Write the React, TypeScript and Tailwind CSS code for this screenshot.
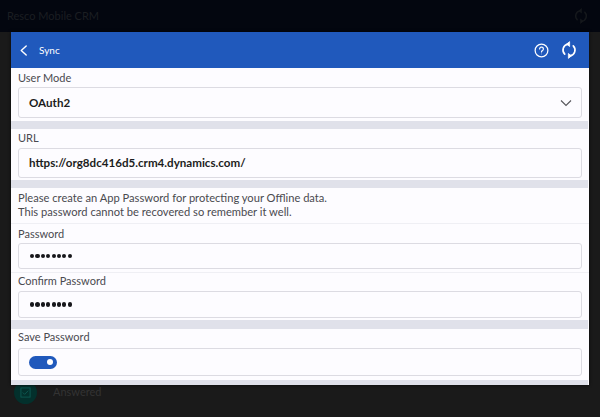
import React from "react";

function SyncIcon({ className }: { className?: string }) {
  return (
    <svg viewBox="0 0 24 24" fill="none" stroke="currentColor" strokeWidth="2.2" strokeLinecap="round" strokeLinejoin="round" className={className}>
      <path d="M6.3 17.6A8 8 0 0 1 10.8 4.1" />
      <path d="M17.7 6.4A8 8 0 0 1 13.2 19.9" />
      <path d="M12.4 1.2 L8.9 4.1 L12.4 7Z" fill="currentColor" strokeWidth="1.2" />
      <path d="M11.6 22.8 L15.1 19.9 L11.6 17Z" fill="currentColor" strokeWidth="1.2" />
    </svg>
  );
}

function Label({ children }: { children: React.ReactNode }) {
  return <div className="text-[11px] leading-[16px] text-[#4a4a4f]">{children}</div>;
}

function Box({ className, children }: { className: string; children?: React.ReactNode }) {
  return (
    <div className={`mx-[7px] flex items-center rounded-[3px] border border-[#dcdbe2] bg-[#fdfcff] pl-[10px] pr-[9px] text-[11.6px] font-bold text-[#1c1c20] ${className}`}>
      {children}
    </div>
  );
}

function Band({ className }: { className: string }) {
  return <div className={`bg-[#e0e1ea] ${className}`} />;
}

function Dots() {
  return (
    <div className="ml-px flex gap-[1.2px]">
      {[0, 1, 2, 3, 4, 5, 6, 7].map((i) => (
        <span key={i} className="h-[4.2px] w-[4.2px] rounded-full bg-[#17171b]" />
      ))}
    </div>
  );
}

export default function App() {
  return (
    <div className="relative h-[417px] w-[600px] overflow-hidden bg-[#1a1a1a] font-['Lato','Noto_Sans',sans-serif]">
      <div className="flex h-[32px] items-center justify-between bg-[#03060f] pl-[7px] pr-[11px] text-[#15181c]">
        <span className="text-[11px] text-[#1b1e22]">Resco Mobile CRM</span>
        <SyncIcon className="h-[16px] w-[16px]" />
      </div>

      <div className="absolute bottom-[13px] left-[14px] flex items-center gap-[16px]">
        <div className="flex h-[23px] w-[23px] items-center justify-center rounded-full bg-[#03302c]">
          <svg viewBox="0 0 12 12" fill="none" stroke="#0d5a52" strokeWidth="1" className="h-[11px] w-[11px]">
            <rect x="1" y="1" width="10" height="10" />
            <path d="M3 6l2 2 4-4" />
          </svg>
        </div>
        <span className="text-[11px] text-[#333333]">Answered</span>
      </div>

      <div className="absolute left-[11px] top-[32px] flex h-[353px] w-[578px] flex-col bg-[#fdfcff] shadow-[0_0_3px_rgba(0,0,0,0.8)]">
        <div className="flex h-[36px] shrink-0 items-center justify-between bg-[#2059bc] pl-[8px] pr-[11px] text-white">
          <div className="flex items-center gap-[11px]">
            <svg viewBox="0 0 10 14" fill="none" stroke="currentColor" strokeWidth="1.6" strokeLinecap="round" strokeLinejoin="round" className="h-[13px] w-[9px]">
              <path d="M8 2L2.5 7 8 12" />
            </svg>
            <span className="text-[10px]">Sync</span>
          </div>
          <div className="flex items-center gap-[11px]">
            <svg viewBox="0 0 16 16" fill="none" stroke="currentColor" strokeWidth="1.3" strokeLinecap="round" className="h-[15px] w-[15px]">
              <circle cx="8" cy="8" r="6.8" />
              <path d="M6 6.3a2 2 0 1 1 3.1 1.7c-.7.4-1.1.8-1.1 1.5" />
              <circle cx="8" cy="11.6" r=".5" fill="currentColor" stroke="none" />
            </svg>
            <SyncIcon className="h-[18px] w-[18px]" />
          </div>
        </div>

        <div className="flex-1 overflow-hidden">
          <div className="px-[7px] pt-[2px]"><Label>User Mode</Label></div>
          <Box className="mt-[1px] h-[31px] justify-between">
            <span>OAuth2</span>
            <svg viewBox="0 0 12 8" fill="none" stroke="#55555a" strokeWidth="1.1" className="h-[8px] w-[12px]">
              <path d="M1 1.5l5 5 5-5" />
            </svg>
          </Box>
          <Band className="mr-px mt-[3px] h-[8px]" />

          <div className="px-[7px] pt-[1px]"><Label>URL</Label></div>
          <Box className="mt-[2px] h-[30px]">https://org8dc416d5.crm4.dynamics.com/</Box>
          <Band className="mr-px mt-[2px] h-[8px]" />

          <div className="px-[7px] pt-[3px] text-[11.15px] leading-[14px] text-[#4a4a4f]">
            <div>Please create an App Password for protecting your Offline data.</div>
            <div>This password cannot be recovered so remember it well.</div>
          </div>
          <div className="mt-[4px] h-px bg-[#efeff4]" />

          <div className="px-[7px] pt-[2px]"><Label>Password</Label></div>
          <Box className="mt-[1px] h-[26px]"><Dots /></Box>
          <div className="mt-[3px] h-px bg-[#efeff4]" />

          <div className="px-[7px]"><Label>Confirm Password</Label></div>
          <Box className="mt-[2px] h-[27px]"><Dots /></Box>
          <Band className="mr-px mt-[2px] h-[9px]" />

          <div className="px-[7px]"><Label>Save Password</Label></div>
          <Box className="mt-[3px] h-[28px]">
            <div className="flex h-[13px] w-[28px] items-center justify-end rounded-full bg-[#2059bc] pr-[4px]">
              <span className="h-[6px] w-[6px] rounded-full bg-white" />
            </div>
          </Box>
          <Band className="mr-px mt-[4px] h-[5px]" />
        </div>
      </div>
    </div>
  );
}
